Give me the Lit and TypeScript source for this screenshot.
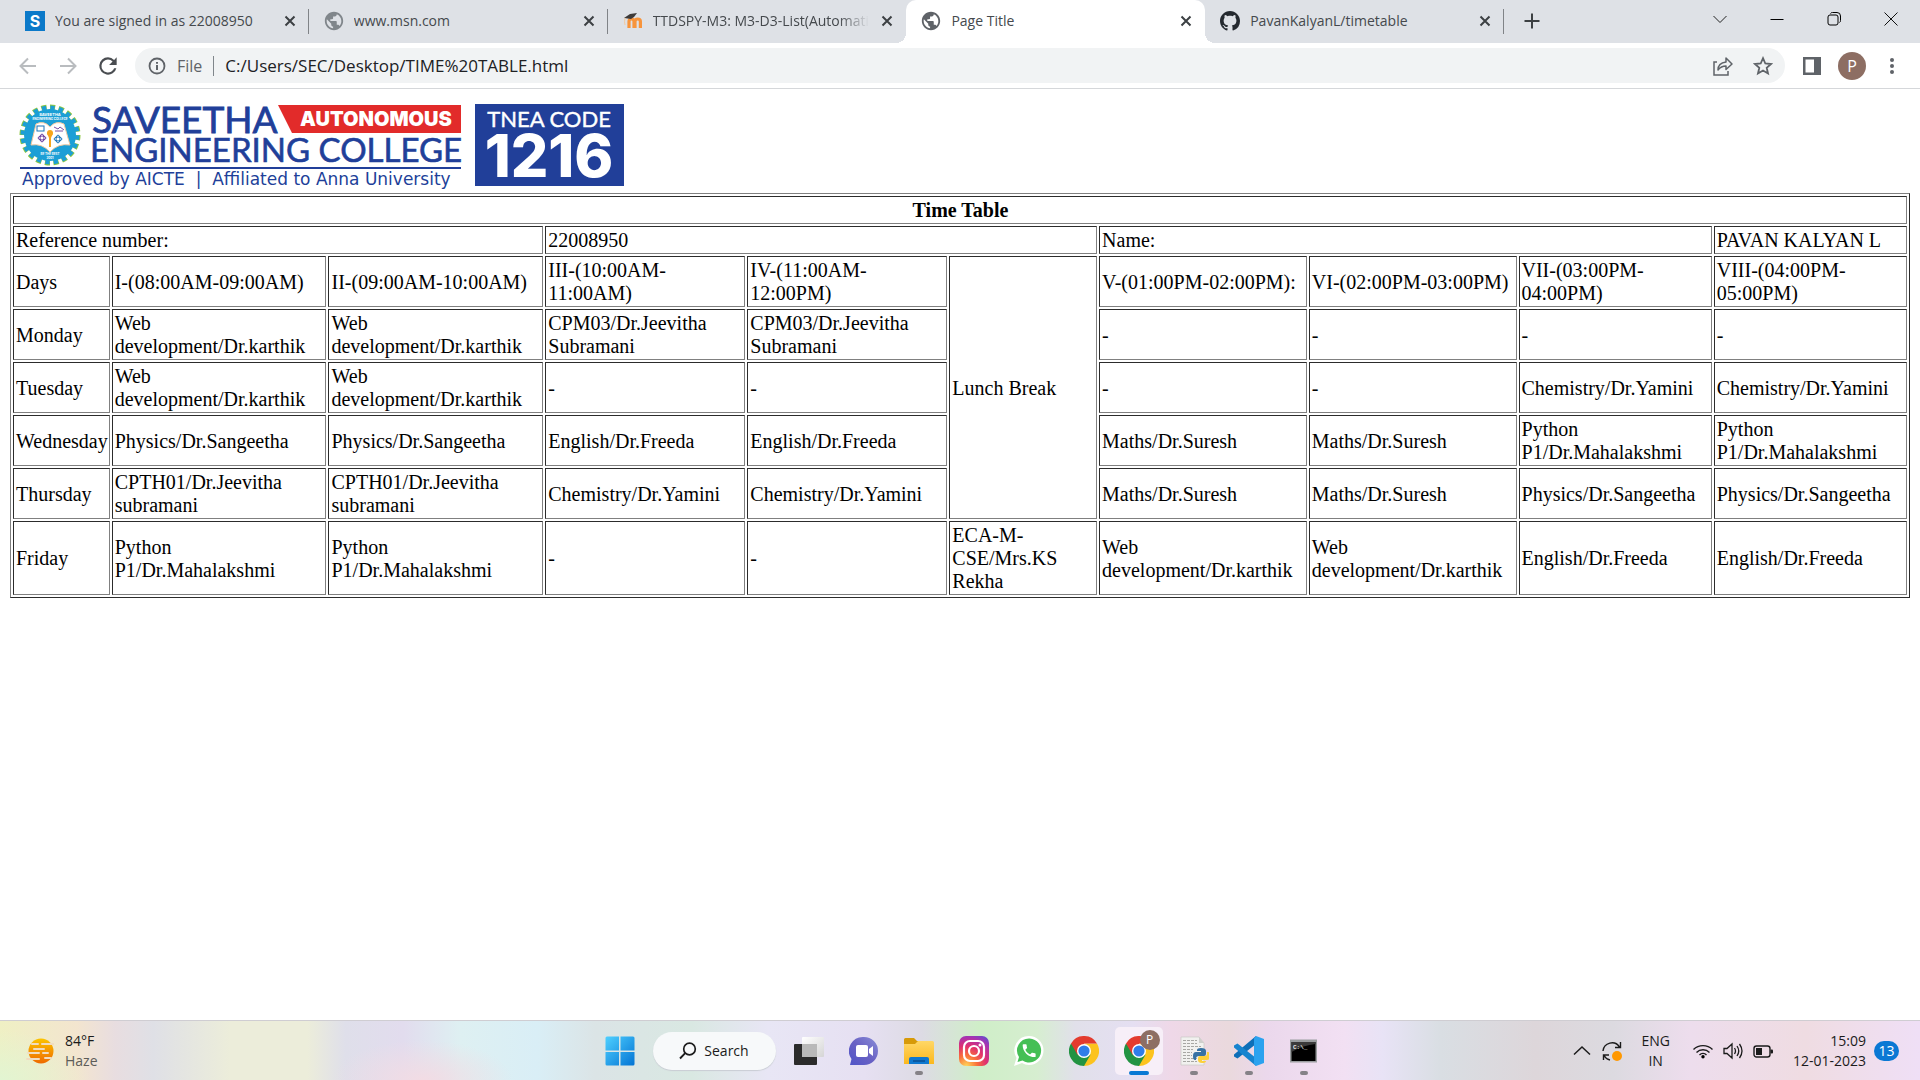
import { LitElement, html, svg, css } from "lit";
import { customElement } from "lit/decorators.js";
import { classMap } from "lit/directives/class-map.js";

/* ---------- shared icons ---------- */

const cross = html`<svg width="12" height="12" viewBox="0 0 12 12" aria-hidden="true">
  <path d="M1.5 1.5l9 9M10.5 1.5l-9 9" stroke="#3c4043" stroke-width="2" fill="none" />
</svg>`;

const globe = (fill: string) => html`<svg width="22" height="22" viewBox="0 0 24 24" aria-hidden="true">
  <path fill=${fill} d="M12 2C6.48 2 2 6.48 2 12s4.48 10 10 10 10-4.48 10-10S17.52 2 12 2zm-1 17.93c-3.95-.49-7-3.85-7-7.93 0-.62.08-1.21.21-1.79L9 15v1c0 1.1.9 2 2 2v1.93zm6.9-2.54c-.26-.81-1-1.39-1.9-1.39h-1v-3c0-.55-.45-1-1-1H8v-2h2c.55 0 1-.45 1-1V7h2c1.1 0 2-.9 2-2v-.41c2.93 1.19 5 4.06 5 7.41 0 2.08-.8 3.97-2.1 5.39z" />
</svg>`;

const saveethaIcon = html`<svg width="20" height="20" viewBox="0 0 20 20" aria-hidden="true">
  <rect width="20" height="20" fill="#0b79c9" />
  <text x="10" y="16" text-anchor="middle" font-family="Inter, sans-serif" font-weight="700" font-size="16" fill="#fff">S</text>
</svg>`;

const moodleIcon = html`<svg width="20" height="20" viewBox="0 0 20 20" aria-hidden="true">
  <path d="M5 18V11.500q0-2.500 2.500-2.500T10 11.500V18M11 18V11.500q0-2.500 2.700-2.500t2.700 2.500V18" transform="translate(1 -1)" fill="none" stroke="#f7943c" stroke-width="3.200" />
  <path d="M1 7l6-4 7-1-3 4-3 2z" fill="#3d3a38" />
  <path d="M2 7q-1 4 0 7" stroke="#f3c9a0" fill="none" />
</svg>`;

const githubIcon = html`<svg width="20" height="20" viewBox="0 0 16 16" aria-hidden="true">
  <path fill="#24292f" d="M8 0C3.580 0 0 3.580 0 8c0 3.540 2.290 6.530 5.470 7.590.4.070.55-.17.55-.38 0-.19-.01-.82-.01-1.490-2.010.37-2.530-.49-2.690-.94-.09-.23-.48-.94-.82-1.130-.28-.15-.68-.52-.01-.53.63-.01 1.080.58 1.230.82.72 1.210 1.870.87 2.330.66.070-.52.28-.87.51-1.070-1.780-.2-3.640-.89-3.640-3.950 0-.87.31-1.590.82-2.150-.08-.2-.36-1.020.08-2.120 0 0 .67-.21 2.200.82.64-.18 1.320-.27 2-.27.68 0 1.360.09 2 .27 1.530-1.040 2.200-.82 2.200-.82.44 1.100.16 1.920.08 2.120.51.56.82 1.270.82 2.150 0 3.070-1.870 3.750-3.650 3.950.29.25.54.73.54 1.480 0 1.070-.01 1.930-.01 2.200 0 .21.15.46.55.38A8.013 8.013 0 0016 8c0-4.420-3.580-8-8-8z" />
</svg>`;

const line = (paths: string, color: string, width = 2, size = 20) => html`<svg
  width=${size} height=${size} viewBox="0 0 20 20" aria-hidden="true">
  <path d=${paths} fill="none" stroke=${color} stroke-width=${width} />
</svg>`;

const buttonReset = css`
  * {
    box-sizing: border-box;
  }
  button {
    appearance: none;
    border: 0;
    margin: 0;
    padding: 0;
    background: none;
    color: inherit;
    font: inherit;
    cursor: default;
    display: flex;
    align-items: center;
    justify-content: center;
  }
  svg {
    display: block;
    flex: none;
  }
`;

/* ---------- browser frame ---------- */

interface Tab {
  title: string;
  icon: unknown;
  active?: boolean;
}

const tabs: Tab[] = [
  { title: "You are signed in as 22008950", icon: saveethaIcon },
  { title: "www.msn.com", icon: globe("#80868b") },
  { title: "TTDSPY-M3: M3-D3-List(Automatic", icon: moodleIcon },
  { title: "Page Title", icon: globe("#5f6368"), active: true },
  { title: "PavanKalyanL/timetable", icon: githubIcon },
];

@customElement("browser-frame")
export class BrowserFrame extends LitElement {
  static styles = [
    buttonReset,
    css`
      :host {
        display: block;
        font-family: "Open Sans", "Noto Sans", sans-serif;
        color: #45494d;
      }
      .strip {
        display: flex;
        height: 43px;
        padding: 0 1px 0 10px;
        background: #dee1e6;
      }
      .tabs {
        display: flex;
        flex: 0 1 1494px;
        min-width: 0;
      }
      .tab {
        position: relative;
        display: flex;
        align-items: center;
        flex: 1 1 0;
        min-width: 0;
        padding: 0 9px 1px 14px;
      }
      .tab.ruled::after {
        content: "";
        position: absolute;
        right: 0;
        top: 9px;
        width: 1px;
        height: 25px;
        background: #808387;
      }
      .tab.active {
        background: #fff;
        border-radius: 10px 10px 0 0;
      }
      .tab.active .flare {
        position: absolute;
        bottom: 0;
        width: 10px;
        height: 10px;
      }
      .flare.left {
        left: -10px;
        background: radial-gradient(circle at 0 0, transparent 10px, #fff 10px);
      }
      .flare.right {
        right: -10px;
        background: radial-gradient(circle at 100% 0, transparent 10px, #fff 10px);
      }
      .label {
        flex: 1;
        min-width: 0;
        gap: 9px;
        height: 40px;
        justify-content: flex-start;
      }
      .icon {
        display: flex;
        justify-content: center;
        flex: 0 0 22px;
      }
      .title {
        flex: 1;
        min-width: 0;
        overflow: hidden;
        white-space: nowrap;
        text-align: left;
        font-size: 14px;
        line-height: 20px;
      }
      .fade {
        mask-image: linear-gradient(to right, #000 calc(100% - 30px), transparent);
      }
      .close {
        width: 20px;
        height: 20px;
        margin-left: 8px;
      }
      .plus {
        width: 40px;
        height: 42px;
        margin-left: 8px;
      }
      .window {
        display: flex;
        margin-left: auto;
      }
      .window button {
        width: 57px;
        height: 37px;
      }
      .toolbar {
        display: flex;
        align-items: center;
        height: 46px;
        padding: 0 8px;
        background: #fff;
        border-bottom: 1px solid #d5d7da;
      }
      .tool {
        width: 40px;
        height: 35px;
      }
      .address {
        display: flex;
        align-items: center;
        flex: 1;
        min-width: 0;
        height: 35px;
        margin: 0 7px;
        padding: 0 2px 0 13px;
        border-radius: 18px;
        background: #f1f3f4;
        font-size: 16px;
      }
      .scheme {
        display: flex;
        align-items: center;
        gap: 11px;
        color: #5f6368;
      }
      .scheme::after {
        content: "";
        width: 1px;
        height: 20px;
        margin-right: 11px;
        background: #80868b;
      }
      .url {
        flex: 1;
        min-width: 0;
        border: 0;
        outline: 0;
        padding: 0;
        background: none;
        color: #202124;
        font: inherit;
        font-size: 17px;
      }
      .avatar {
        display: flex;
        align-items: center;
        justify-content: center;
        width: 28px;
        height: 28px;
        border-radius: 50%;
        background: #8d6e63;
        color: #fff;
        font-size: 16px;
      }
    `,
  ];

  render() {
    return html`
      <div class="strip">
        <div class="tabs">
          ${tabs.map(
            (t, i) => html`<div class=${classMap({ tab: true, active: !!t.active, ruled: !t.active && !tabs[i + 1]?.active })}>
              ${t.active ? html`<span class="flare left"></span><span class="flare right"></span>` : ""}
              <button class="label">
                <span class="icon">${t.icon}</span>
                <span class=${classMap({ title: true, fade: t.title.length > 30 })}>${t.title}</span>
              </button>
              <button class="close" aria-label="Close tab">${cross}</button>
            </div>`
          )}
        </div>
        <button class="plus" aria-label="New tab">${line("M10 2.500v15M2.500 10h15", "#3c4043", 2)}</button>
        <div class="window">
          <button aria-label="Search tabs">${line("M3.500 7l6.500 6.500L16.500 7", "#222", 1)}</button>
          <button aria-label="Minimize">${line("M3.500 10.500h13", "#000", 1)}</button>
          <button aria-label="Restore">
            <svg width="20" height="20" viewBox="0 0 20 20" aria-hidden="true">
              <rect x="4" y="6" width="10" height="10" rx="2" fill="none" stroke="#000" />
              <path d="M6.500 4.500q.5-1 2-1h4.500q3.500 0 3.500 3.500v4.500q0 1.500-1 2" fill="none" stroke="#000" />
            </svg>
          </button>
          <button aria-label="Close">${line("M3.500 3.500l13 13M16.500 3.500l-13 13", "#111", 1)}</button>
        </div>
      </div>
      <div class="toolbar">
        <button class="tool" aria-label="Back">${line("M18 10H3M10 2.500L2.500 10l7.500 7.500", "#b9bcbf", 2)}</button>
        <button class="tool" aria-label="Forward">${line("M2 10h15M10 2.500l7.500 7.500-7.500 7.500", "#b9bcbf", 2)}</button>
        <button class="tool" aria-label="Reload">
          <svg width="26" height="26" viewBox="0 0 24 24" aria-hidden="true">
            <path fill="#4a4d51" d="M17.650 6.350A7.958 7.958 0 0012 4a8 8 0 107.730 10h-2.080A6 6 0 1112 6c1.660 0 3.140.69 4.220 1.780L13 11h7V4l-2.350 2.350z" />
          </svg>
        </button>
        <div class="address">
          <div class="scheme">
            <svg width="18" height="18" viewBox="0 0 18 18" aria-hidden="true">
              <circle cx="9" cy="9" r="7.500" fill="none" stroke="#5f6368" stroke-width="1.800" />
              <path d="M9 8v5M9 5v1.800" stroke="#5f6368" stroke-width="2" />
            </svg>
            <span>File</span>
          </div>
          <input class="url" aria-label="Address" value="C:/Users/SEC/Desktop/TIME%20TABLE.html" />
          <button class="tool" aria-label="Share">
            <svg width="22" height="20" viewBox="0 0 22 20" aria-hidden="true">
              <path d="M5 6H2v13h14v-4" fill="none" stroke="#5f6368" stroke-width="1.500" />
              <path d="M6 14q0-7 8-8V2l6 6-6 5.500V10q-5 0-8 4z" fill="none" stroke="#5f6368" stroke-width="1.500" stroke-linejoin="round" />
            </svg>
          </button>
          <button class="tool" aria-label="Bookmark this page">
            <svg width="20" height="20" viewBox="0 0 20 20" aria-hidden="true">
              <path d="M10 2.200l2.300 5.300 5.700.5-4.300 3.800 1.300 5.700-5-3-5 3 1.300-5.700L2 8l5.700-.5z" fill="none" stroke="#5f6368" stroke-width="1.800" />
            </svg>
          </button>
        </div>
        <button class="tool" aria-label="Side panel">
          <svg width="18" height="18" viewBox="0 0 18 18" aria-hidden="true">
            <path d="M0 0h18v18H0zM2.500 2.500v13H11v-13z" fill="#5f6368" fill-rule="evenodd" />
          </svg>
        </button>
        <button class="tool" aria-label="Profile"><span class="avatar">P</span></button>
        <button class="tool" aria-label="Menu">
          <svg width="20" height="20" viewBox="0 0 20 20" fill="#5f6368" aria-hidden="true">
            <circle cx="10" cy="4" r="2" /><circle cx="10" cy="10" r="2" /><circle cx="10" cy="16" r="2" />
          </svg>
        </button>
      </div>
    `;
  }
}

/* ---------- timetable page ---------- */

interface Cell {
  text: string;
  rows?: number;
}

const web = "Web development/Dr.karthik";
const physics = "Physics/Dr.Sangeetha";
const english = "English/Dr.Freeda";
const chemistry = "Chemistry/Dr.Yamini";
const python = "Python P1/Dr.Mahalakshmi";
const maths = "Maths/Dr.Suresh";
const cpm = "CPM03/Dr.Jeevitha Subramani";
const cpth = "CPTH01/Dr.Jeevitha subramani";

const schedule: (string | Cell)[][] = [
  [
    "Days",
    "I-(08:00AM-09:00AM)",
    "II-(09:00AM-10:00AM)",
    "III-(10:00AM-11:00AM)",
    "IV-(11:00AM-12:00PM)",
    { text: "Lunch Break", rows: 5 },
    "V-(01:00PM-02:00PM):",
    "VI-(02:00PM-03:00PM)",
    "VII-(03:00PM-04:00PM)",
    "VIII-(04:00PM-05:00PM)",
  ],
  ["Monday", web, web, cpm, cpm, "-", "-", "-", "-"],
  ["Tuesday", web, web, "-", "-", "-", "-", chemistry, chemistry],
  ["Wednesday", physics, physics, english, english, maths, maths, python, python],
  ["Thursday", cpth, cpth, chemistry, chemistry, maths, maths, physics, physics],
  ["Friday", python, python, "-", "-", "ECA-M-CSE/Mrs.KS Rekha", web, web, english, english],
];

@customElement("time-table-page")
export class TimeTablePage extends LitElement {
  static styles = css`
    :host {
      display: block;
      padding: 10px;
      background: #fff;
      color: #000;
      font-family: "Liberation Serif", "Times New Roman", serif;
      font-size: 20px;
      line-height: 23px;
    }
    .banner {
      display: block;
    }
    .timetable {
      width: 100%;
      border: 1px outset gray;
      border-spacing: 2px;
    }
    .timetable td,
    .timetable th {
      border: 1px inset gray;
      padding: 2px 1px 1px 2px;
    }
    .timetable td {
      text-align: left;
    }
  `;

  render() {
    return html`
      <svg class="banner" width="624" height="94" viewBox="10 99 624 94" role="img" aria-label="Saveetha Engineering College">
        <circle cx="50" cy="135" r="27" fill="none" stroke="#8cc63f" stroke-width="7" stroke-dasharray="1.200 .8" pathLength="40" />
        <circle cx="50" cy="135" r="26" fill="#1c9fd6" />
        <circle cx="50" cy="135" r="27" fill="none" stroke="#1c9fd6" stroke-width="5" stroke-dasharray="1 1" stroke-dashoffset="-.1" pathLength="40" />
        <path d="M31 145l5-21q8-4 14 3 6-7 14-3l6 21q-12-2-20 7-8-9-19-7z" fill="#fff" stroke="#f2c9a0" stroke-width="1" />
        <rect x="37" y="126" width="7" height="5" fill="none" stroke="#1b75bb" />
        <path d="M54 127l4 2 2-2 4 3M55 131h8" stroke="#7b4ea3" fill="none" />
        <g fill="none" stroke="#6b3fa0">
          <ellipse cx="42" cy="138" rx="4" ry="2" /><ellipse cx="42" cy="138" rx="2" ry="4" />
        </g>
        <g fill="none" stroke="#1b75bb">
          <ellipse cx="58" cy="139" rx="4" ry="2" /><ellipse cx="58" cy="139" rx="2" ry="4" />
        </g>
        <path d="M47 133h6l-2 5v9h-2v-9z" fill="#f7a51c" />
        <circle cx="50" cy="133" r="3" fill="#f7a51c" />
        <text x="50" y="116" text-anchor="middle" font-family="Inter, sans-serif" font-weight="700" font-size="4" fill="#fff">SAVEETHA</text>
        <text x="50" y="120" text-anchor="middle" font-family="Inter, sans-serif" font-weight="700" font-size="3" fill="#fff">ENGINEERING COLLEGE</text>
        <text x="50" y="155" text-anchor="middle" font-family="Inter, sans-serif" font-weight="700" font-size="3" fill="#fff">BE THE BEST</text>
        <text x="50" y="159" text-anchor="middle" font-family="Inter, sans-serif" font-weight="700" font-size="3" fill="#fff">2001</text>

        <g fill="#213f99">
          <text x="92" y="133" font-family="Lato, sans-serif" font-size="37" stroke="#213f99" stroke-width=".8">SAVEETHA</text>
          <text x="90" y="162" font-family="Lato, sans-serif" font-size="33" stroke="#213f99" stroke-width=".6">ENGINEERING COLLEGE</text>
          <rect x="20" y="167" width="441" height="2" />
          <text x="22" y="185" font-family="DejaVu Sans, sans-serif" font-size="17">Approved by AICTE &nbsp;|&nbsp; Affiliated to Anna University</text>
          <rect x="475" y="104" width="149" height="82" />
        </g>
        <path d="M278 105h183v28H292z" fill="#e22b2a" />
        <text x="300" y="126" font-family="Inter, sans-serif" font-weight="900" font-size="20" fill="#fff">AUTONOMOUS</text>
        <text x="549" y="127" text-anchor="middle" font-family="Lato, sans-serif" font-size="22" fill="#fff" stroke="#fff" stroke-width=".4">TNEA CODE</text>
        <text x="549" y="177" text-anchor="middle" font-family="Inter, sans-serif" font-weight="800" font-size="59" fill="#fff">1216</text>
      </svg>
      <table class="timetable">
        <thead>
          <tr>
            <th colspan="10">Time Table</th>
          </tr>
        </thead>
        <tbody>
          <tr>
            <td colspan="3">Reference number:</td>
            <td colspan="3">22008950</td>
            <td colspan="3">Name:</td>
            <td>PAVAN KALYAN L</td>
          </tr>
          ${schedule.map(
            (row) => html`<tr>
              ${row.map((c) => (typeof c === "string" ? html`<td>${c}</td>` : html`<td rowspan=${c.rows ?? 1}>${c.text}</td>`))}
            </tr>`
          )}
        </tbody>
      </table>
    `;
  }
}

/* ---------- taskbar ---------- */

const chrome = svg`
  <path d="M15 15V7.500H28A15 15 0 0115 30z" fill="#fcc31e" />
  <path d="M15 15l6.500 3.750L15 30A15 15 0 012 7.500z" fill="#229342" />
  <path d="M2 7.500A15 15 0 0128 7.500H15v7.500l-6.500 3.750z" fill="#e33b2e" />
  <circle cx="15" cy="15" r="7" fill="#fff" />
  <circle cx="15" cy="15" r="5.600" fill="#2f7de9" />`;

const art = (label: unknown) => html`<svg width="30" height="30" viewBox="0 0 30 30" aria-hidden="true">${label}</svg>`;

interface App {
  name: string;
  icon: unknown;
  running?: boolean;
  active?: boolean;
}

const apps: App[] = [
  {
    name: "Task view",
    icon: art(svg`
      <defs><linearGradient id="tv" x1="0" y1="0" x2="1" y2="1"><stop offset="0" stop-color="#fff" /><stop offset="1" stop-color="#d5d5d5" /></linearGradient></defs>
      <rect x="0" y="8" width="23" height="21" rx="1" fill="#2b2b2b" />
      <rect x="8" y="1" width="22" height="20" rx="1" fill="url(#tv)" />
      <rect x="8" y="8" width="15" height="13" fill="#b9b9b9" />`),
  },
  {
    name: "Chat",
    icon: art(svg`
      <defs><linearGradient id="ct" x1="1" y1="0" x2="0" y2="1"><stop offset="0" stop-color="#8a8fd8" /><stop offset=".5" stop-color="#6a62c4" /><stop offset="1" stop-color="#4f55c8" /></linearGradient></defs>
      <path d="M15 1a14 14 0 110 28H1l1.500-6A14 14 0 0115 1z" fill="url(#ct)" />
      <rect x="7" y="9" width="12" height="12" rx="2" fill="#fff" /><path d="M20 13l4-3v10l-4-3z" fill="#fff" />`),
  },
  {
    name: "File Explorer",
    running: true,
    icon: art(svg`
      <defs><linearGradient id="fe" x1="0" y1="0" x2="0" y2="1"><stop offset="0" stop-color="#ffd766" /><stop offset="1" stop-color="#fbb81e" /></linearGradient></defs>
      <path d="M0 8V3.500Q0 2 1.500 2H10l3 3h6v6H0z" fill="#d79a08" />
      <path d="M0 8h11l3-3h14.500Q30 5 30 6.500V28H0z" fill="url(#fe)" />
      <path d="M5 28v-5q0-2 2-2h16q2 0 2 2v5z" fill="#0f78cf" /><path d="M9 25h12" stroke="#0a4f93" stroke-width="1.500" />`),
  },
  {
    name: "Instagram",
    icon: art(svg`
      <defs><radialGradient id="ig" cx=".25" cy="1" r="1.200"><stop offset="0" stop-color="#ffd65a" /><stop offset=".3" stop-color="#f9703a" /><stop offset=".55" stop-color="#e0306f" /><stop offset=".8" stop-color="#a932b0" /><stop offset="1" stop-color="#5b4fd0" /></radialGradient></defs>
      <rect width="30" height="30" rx="7" fill="url(#ig)" />
      <g fill="none" stroke="#fff" stroke-width="2.200"><rect x="5" y="5" width="20" height="20" rx="6" /><circle cx="15" cy="15" r="5" /></g>
      <circle cx="21" cy="9" r="1.500" fill="#fff" />`),
  },
  {
    name: "WhatsApp",
    icon: art(svg`
      <path d="M15 0a14.500 14.500 0 110 29q-4 0-7-2L0 30l2.500-8A14.500 14.500 0 0115 0z" fill="#fff" />
      <path d="M15.500 2.500a12 12 0 11-7 22L3.500 26l1.500-5A12 12 0 0115.500 2.500z" fill="#45bf55" />
      <path transform="translate(6.500 6) scale(.72)" fill="#fff" d="M6.620 10.790c1.440 2.830 3.760 5.140 6.590 6.590l2.200-2.200c.27-.27.67-.36 1.020-.24 1.120.37 2.330.57 3.570.57.55 0 1 .45 1 1V20c0 .55-.45 1-1 1-9.390 0-17-7.610-17-17 0-.55.45-1 1-1h3.500c.55 0 1 .45 1 1 0 1.250.2 2.450.57 3.570.11.35.03.74-.25 1.020l-2.200 2.200z" />`),
  },
  { name: "Google Chrome", icon: art(chrome) },
  {
    name: "Google Chrome, profile P",
    active: true,
    icon: art(chrome),
  },
  {
    name: "Python IDLE",
    running: true,
    icon: art(svg`
      <path d="M2 1h18l5 6v22H2z" fill="#f1f1ef" stroke="#c9c9c6" stroke-width=".7" />
      <path d="M20 1l5 6h-5z" fill="#cfcfcc" />
      <g stroke="#a7a7a3" stroke-dasharray="3 1"><path d="M4 4.500h14M4 7.500h14M4 10.500h18M4 13.500h10M4 16.500h9M4 19.500h9M4 22.500h14M4 25.500h14" /></g>
      <path d="M22 12q5 0 5 3v3q0 2-2 2h-5q-3 0-3 3v1h-1q-2 0-2-4t3-4h5v-1h-4v-1q0-2 4-2z" fill="#3772a4" />
      <path d="M23 27q-4 0-4-3v-2q0-2 2-2h5q2 0 2-2v-2h1q2 0 2 4t-3 4h-5v1h4q0 2-4 2z" fill="#fdd03b" />`),
  },
  {
    name: "Visual Studio Code",
    running: true,
    icon: art(svg`
      <path d="M22 0v8L3.500 22.500 0 20.500v-2z" fill="#0d6fb8" />
      <path d="M22 30v-8L3.500 7.500 0 9.500v2z" fill="#1684cf" />
      <path d="M22 0l8 3v24l-8 3-2-2.500V2.500z" fill="#2ba2ef" />`),
  },
  {
    name: "Command Prompt",
    running: true,
    icon: art(svg`
      <rect x="1" y="3.500" width="27" height="23" fill="#9a9d9f" />
      <rect x="2.500" y="6" width="24" height="19" fill="#000" />
      <path d="M2.500 6h24v2q-12 1-24 8z" fill="#3a3a3a" />
      <text x="4" y="13" font-family="Liberation Mono, monospace" font-weight="700" font-size="6" fill="#e8e8e8">C:\\_</text>`),
  },
];

@customElement("task-bar")
export class TaskBar extends LitElement {
  static styles = [
    buttonReset,
    css`
      :host {
        display: grid;
        grid-template-columns: 1fr auto 1fr;
        align-items: center;
        height: 60px;
        padding: 0 21px 0 24px;
        border-top: 1px solid #cfcdd2;
        box-sizing: border-box;
        font-family: "Open Sans", "Noto Sans", sans-serif;
        font-size: 14px;
        line-height: 20px;
        color: #1b1b1b;
        background: radial-gradient(90px 50px at 0 100%, #e2f5d2, transparent),
          radial-gradient(90px 40px at 22% 100%, #f2dce4, transparent),
          linear-gradient(
            to right,
            #eff0c4 0%,
            #f3e5cf 4%,
            #e8dde0 6%,
            #dfe0e6 8%,
            #ecedda 12%,
            #ecedda 16%,
            #dfdfea 18%,
            #e2dcee 21%,
            #def0f2 24%,
            #d9eef6 28%,
            #dbe4e6 31%,
            #d9e8e2 36%,
            #e8e6f5 40%,
            #e6e0f2 45%,
            #dddbe4 48%,
            #cfeec8 51%,
            #d6eed0 54%,
            #e1e0ea 56%,
            #e5dff2 59%,
            #efd8e8 61%,
            #ead9dd 64%,
            #ebd8ec 66%,
            #f2e0f3 70%,
            #e8e3f6 72%,
            #d9dee3 75%,
            #ddd6da 80%,
            #dcdae0 84%,
            #eddded 88%,
            #efdce2 94%,
            #efdff6 100%
          );
      }
      .weather {
        justify-self: start;
        gap: 11px;
        text-align: left;
      }
      .stack {
        display: flex;
        flex-direction: column;
      }
      .soft {
        color: #5c5c58;
      }
      .center {
        display: flex;
        align-items: center;
        gap: 7px;
      }
      .app {
        position: relative;
        width: 48px;
        height: 48px;
        border-radius: 5px;
      }
      .app.active {
        background: #f7eff8;
      }
      .app.running::after,
      .app.active::after {
        content: "";
        position: absolute;
        bottom: 0;
        left: 20px;
        width: 8px;
        height: 4px;
        border-radius: 2px;
        background: #858287;
      }
      .app.active::after {
        left: 14px;
        width: 20px;
        background: #0a78d4;
      }
      .badge {
        position: absolute;
        top: 3px;
        right: 3px;
        width: 20px;
        height: 20px;
        border-radius: 50%;
        background: #8d6e63;
        color: #fff;
        font-size: 12px;
        line-height: 20px;
        text-align: center;
      }
      .search {
        width: 123px;
        height: 38px;
        margin: 0 2px;
        gap: 7px;
        border-radius: 19px;
        background: #f7f9fa;
        box-shadow: 0 1px 1px #c9cdd4;
      }
      .tray {
        display: flex;
        align-items: center;
        justify-self: end;
        gap: 10px;
        white-space: nowrap;
      }
      .lang {
        text-align: center;
        align-items: center;
        margin: 0 13px 0 9px;
      }
      .clock {
        text-align: right;
        align-items: flex-end;
        margin-left: 10px;
      }
      .count {
        width: 25px;
        height: 20px;
        margin-left: -2px;
        border-radius: 10px;
        background: #0a78d4;
        color: #fff;
      }
    `,
  ];

  render() {
    return html`
      <button class="weather">
        <svg width="30" height="30" viewBox="0 0 30 30" aria-hidden="true">
          <defs><linearGradient id="sun" x1="0" y1="0" x2="0" y2="1"><stop offset="0" stop-color="#fcc400" /><stop offset="1" stop-color="#ee6a00" /></linearGradient></defs>
          <circle cx="17" cy="15" r="12.500" fill="url(#sun)" />
          <g stroke="#f0dcc0" stroke-width="2" stroke-linecap="round">
            <path d="M8 8h6M18 8h12M10 13h10M4 17h11M19 17h5M3 23h12M21 22h6" />
          </g>
        </svg>
        <span class="stack"><span>84°F</span><span class="soft">Haze</span></span>
      </button>
      <div class="center">
        <button class="app" aria-label="Start">
          <svg width="30" height="30" viewBox="0 0 30 30" aria-hidden="true">
            <defs><linearGradient id="win" x1="0" y1="0" x2="1" y2="1"><stop offset="0" stop-color="#4fd0ff" /><stop offset="1" stop-color="#0374d4" /></linearGradient></defs>
            <path d="M.5 2q0-1.500 1.500-1.500h12V14.500H.5zM15.500.5H28q1.500 0 1.500 1.500v12.500h-14zM.5 16H14v13.500H2Q.5 29.500.5 28zM15.500 16h14v12q0 1.500-1.500 1.500H15.500z" fill="url(#win)" />
          </svg>
        </button>
        <button class="search">
          <svg width="18" height="18" viewBox="0 0 18 18" aria-hidden="true">
            <circle cx="10.500" cy="7" r="5.800" fill="none" stroke="#1b1b1b" stroke-width="1.700" />
            <path d="M6.200 11.200L1 16.500" stroke="#1b1b1b" stroke-width="1.900" />
          </svg>
          <span>Search</span>
        </button>
        ${apps.map(
          (a) => html`<button class=${classMap({ app: true, running: !!a.running, active: !!a.active })} aria-label=${a.name}>
            ${a.icon}${a.active ? html`<span class="badge">P</span>` : ""}
          </button>`
        )}
      </div>
      <div class="tray">
        <button aria-label="Show hidden icons">${line("M2 13.500L10 6l8 7.500", "#1b1b1b", 1.5)}</button>
        <button aria-label="Update available">
          <svg width="20" height="20" viewBox="0 0 20 20" aria-hidden="true">
            <path d="M1 10a9 9 0 0116.500-4M18.500 1v5.500H13M8 19a9 9 0 01-6-4.500M1.500 19v-5H7" fill="none" stroke="#1b1b1b" stroke-width="1.400" />
            <circle cx="15" cy="15" r="5" fill="#ff9800" />
          </svg>
        </button>
        <button class="stack lang"><span>ENG</span><span>IN</span></button>
        <button aria-label="Network">
          <svg width="20" height="20" viewBox="0 0 20 20" aria-hidden="true">
            <g fill="none" stroke="#1b1b1b" stroke-width="1.400"><path d="M.5 8.500a13.500 13.500 0 0119 0M3.500 11.500a9.200 9.200 0 0113 0M6.500 14a5 5 0 017 0" /></g>
            <circle cx="10" cy="15.800" r="1.700" />
          </svg>
        </button>
        <button aria-label="Volume">
          <svg width="20" height="20" viewBox="0 0 20 20" fill="none" stroke="#1b1b1b" stroke-width="1.300" aria-hidden="true">
            <path d="M1 7.500h3L9 3v14l-5-4.500H1zM11.500 7q2 3 0 6M14 5q3.500 5 0 10M16.500 3q5 7 0 14" />
          </svg>
        </button>
        <button aria-label="Battery">
          <svg width="20" height="20" viewBox="0 0 20 20" aria-hidden="true">
            <rect x="1" y="5" width="16" height="11" rx="2.500" fill="none" stroke="#1b1b1b" stroke-width="1.400" />
            <rect x="3" y="7" width="6" height="7" fill="#1b1b1b" /><rect x="17.500" y="8.500" width="2.500" height="4" rx="1" fill="#1b1b1b" />
          </svg>
        </button>
        <button class="stack clock"><span>15:09</span><span>12-01-2023</span></button>
        <button class="count" aria-label="13 notifications">13</button>
      </div>
    `;
  }
}

/* ---------- root ---------- */

@customElement("app-root")
export class AppRoot extends LitElement {
  static styles = css`
    :host {
      display: flex;
      flex-direction: column;
      min-height: 100vh;
      background: #fff;
    }
    .page {
      flex: 1;
    }
  `;

  render() {
    return html`
      <browser-frame></browser-frame>
      <time-table-page class="page"></time-table-page>
      <task-bar></task-bar>
    `;
  }
}
